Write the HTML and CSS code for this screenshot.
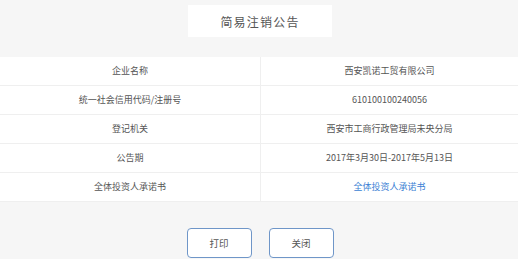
FILE: index.html
```html
<!DOCTYPE html>
<html lang="zh">
<head>
<meta charset="utf-8">
<link rel="stylesheet" href="styles.css">
</head>
<body>
<div class="page">
  <div class="title-wrap">
    <div class="title">简易注销公告</div>
  </div>
  <table class="info">
    <tr><td class="label">企业名称</td><td class="value">西安凯诺工贸有限公司</td></tr>
    <tr><td class="label">统一社会信用代码/注册号</td><td class="value">610100100240056</td></tr>
    <tr><td class="label">登记机关</td><td class="value">西安市工商行政管理局未央分局</td></tr>
    <tr><td class="label">公告期</td><td class="value">2017年3月30日-2017年5月13日</td></tr>
    <tr><td class="label">全体投资人承诺书</td><td class="value"><a class="link" href="#">全体投资人承诺书</a></td></tr>
  </table>
  <div class="actions">
    <button class="btn">打印</button>
    <button class="btn">关闭</button>
  </div>
</div>
</body>
</html>
```
FILE: styles.css
```css
html, body {
  margin: 0;
  padding: 0;
  background: #f6f6f6;
}
body {
  font-family: "Noto Sans CJK SC", "Liberation Sans", sans-serif;
  color: #555;
}
.page {
  display: flex;
  flex-direction: column;
  padding-top: 5px;
}
.title-wrap {
  display: flex;
  justify-content: center;
  padding-left: 2px;
}
.title {
  width: 144px;
  height: 32px;
  background: #fff;
  display: flex;
  align-items: center;
  justify-content: center;
  font-size: 12px;
  letter-spacing: 1.2px;
  color: #555;
}
.info {
  margin-top: 20px;
  width: 100%;
  border-collapse: collapse;
  background: #fff;
  table-layout: fixed;
}
.info td {
  height: 28px;
  padding: 0;
  text-align: center;
  font-size: 9px;
  color: #555;
  border-top: 1px solid #efefef;
  border-bottom: 1px solid #efefef;
  line-height: 28px;
}
.info td.label {
  width: 260px;
  border-right: 1px solid #efefef;
}
.info tr:first-child td {
  border-top: none;
}
.link {
  color: #3b7fd4;
  text-decoration: none;
}
.actions {
  display: flex;
  justify-content: center;
  gap: 17px;
  margin-top: 26px;
  padding-left: 2px;
}
.btn {
  width: 65px;
  height: 30px;
  background: #fff;
  border: 1px solid #6f96c8;
  border-radius: 4px;
  font-family: "Noto Sans CJK SC", "Liberation Sans", sans-serif;
  font-size: 9.5px;
  color: #555;
  padding: 0;
}
```
